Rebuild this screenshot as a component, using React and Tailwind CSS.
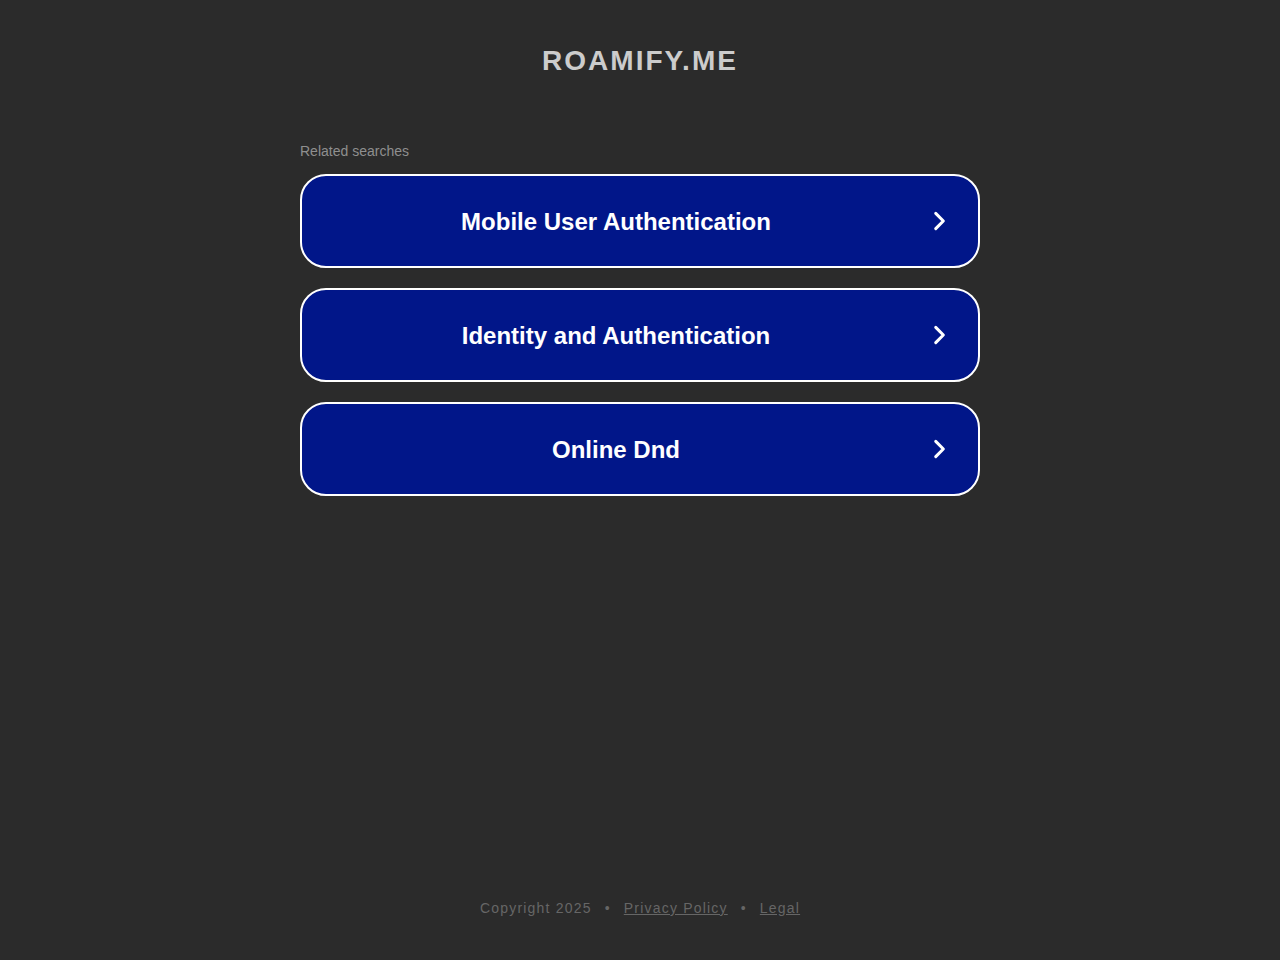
const LINKS = ['Mobile User Authentication', 'Identity and Authentication', 'Online Dnd'];

function Chevron() {
  return (
    <svg width="26" height="26" viewBox="0 0 24 24" fill="none" stroke="#ffffff" strokeWidth="2.8" strokeLinecap="round" strokeLinejoin="round">
      <path d="M9 5l7 7-7 7" />
    </svg>
  );
}

export default function App() {
  return (
    <div className="min-h-screen bg-[#2b2b2b] flex flex-col font-['Liberation_Sans',Arial,sans-serif]">
      <header className="pt-[43px] text-center">
        <h1 className="text-[28px] leading-[36px] font-bold tracking-[2px] text-[#cccccc]">ROAMIFY.ME</h1>
      </header>

      <main className="w-[680px] mx-auto mt-[63px] flex-1">
        <p className="text-[14px] leading-[18px] text-[#8f8f8f]">Related searches</p>
        <div className="mt-[14px] flex flex-col gap-[20px]">
          {LINKS.map(label => (
            <a
              key={label}
              href="#"
              className="relative h-[94px] rounded-[26px] border-2 border-white bg-[#011689] flex items-center justify-center"
            >
              <span className="text-[24px] font-bold text-white -ml-[48px] pt-[2px]">{label}</span>
              <span className="absolute right-[26px] top-1/2 -translate-y-1/2 flex">
                <Chevron />
              </span>
            </a>
          ))}
        </div>
      </main>

      <footer className="pb-[43px] text-center text-[14px] leading-[18px] tracking-[1.2px] text-[#666666]">
        <span>Copyright 2025</span>
        <span className="mx-[13px]">•</span>
        <a href="#" className="underline">Privacy Policy</a>
        <span className="mx-[13px]">•</span>
        <a href="#" className="underline">Legal</a>
      </footer>
    </div>
  );
}
